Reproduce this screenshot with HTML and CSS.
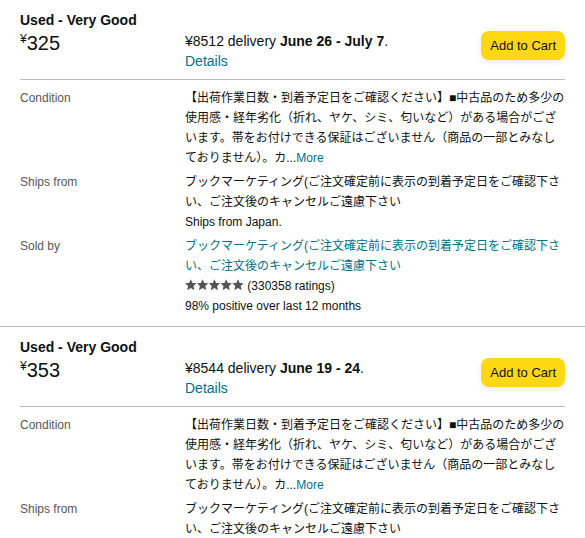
FILE: index.html
```html
<!DOCTYPE html>
<html lang="ja">
<head>
<meta charset="utf-8">
<link rel="stylesheet" href="styles.css">
</head>
<body>
<div class="offer">
  <div class="offer-title">Used - Very Good</div>
  <div class="head">
    <div class="price"><span class="cur">¥</span>325</div>
    <div class="delivery">
      <div>¥8512 delivery <b>June 26 - July 7</b>.</div>
      <a class="link">Details</a>
    </div>
    <button class="cart">Add to Cart</button>
  </div>
  <div class="details">
    <div class="label">Condition</div>
    <div class="value">【出荷作業日数・到着予定日をご確認ください】■中古品のため多少の<br>使用感・経年劣化（折れ、ヤケ、シミ、匂いなど）がある場合がござ<br>います。帯をお付けできる保証はございません（商品の一部とみなし<br>ておりません）。カ...<a class="link">More</a></div>
    <div class="label">Ships from</div>
    <div class="value">ブックマーケティング(ご注文確定前に表示の到着予定日をご確認下さ<br>い、ご注文後のキャンセルご遠慮下さい<br>Ships from Japan.</div>
    <div class="label">Sold by</div>
    <div class="value"><a class="link">ブックマーケティング(ご注文確定前に表示の到着予定日をご確認下さ<br>い、ご注文後のキャンセルご遠慮下さい</a><br><span class="stars"><svg width="59" height="12" viewBox="0 0 59 12"><g fill="#555"><path id="st" d="M5.8 0.2L7.5 4L11.6 4.3L8.5 7.1L9.4 11.3L5.8 9.1L2.2 11.3L3.1 7.1L0 4.3L4.1 4Z"/><use href="#st" x="11.8"/><use href="#st" x="23.6"/><use href="#st" x="35.4"/><use href="#st" x="47.2"/></g></svg></span> (330358 ratings)<br>98% positive over last 12 months</div>
  </div>
</div>
<div class="offer">
  <div class="offer-title">Used - Very Good</div>
  <div class="head">
    <div class="price"><span class="cur">¥</span>353</div>
    <div class="delivery">
      <div>¥8544 delivery <b>June 19 - 24</b>.</div>
      <a class="link">Details</a>
    </div>
    <button class="cart">Add to Cart</button>
  </div>
  <div class="details">
    <div class="label">Condition</div>
    <div class="value">【出荷作業日数・到着予定日をご確認ください】■中古品のため多少の<br>使用感・経年劣化（折れ、ヤケ、シミ、匂いなど）がある場合がござ<br>います。帯をお付けできる保証はございません（商品の一部とみなし<br>ておりません）。カ...<a class="link">More</a></div>
    <div class="label">Ships from</div>
    <div class="value">ブックマーケティング(ご注文確定前に表示の到着予定日をご確認下さ<br>い、ご注文後のキャンセルご遠慮下さい<br>Ships from Japan.</div>
    <div class="label">Sold by</div>
    <div class="value"><a class="link">ブックマーケティング(ご注文確定前に表示の到着予定日をご確認下さ<br>い、ご注文後のキャンセルご遠慮下さい</a></div>
  </div>
</div>
</body>
</html>
```
FILE: styles.css
```css
html, body {
  margin: 0;
  padding: 0;
  background: #fff;
}
body {
  font-family: "Liberation Sans", "Noto Sans CJK JP", sans-serif;
  color: #0f1111;
}
.offer {
  padding: 11px 20px 10px;
  border-bottom: 1px solid #bbb;
}
.offer-title {
  font-size: 14px;
  font-weight: bold;
  line-height: 18px;
}
.head {
  display: flex;
  align-items: flex-start;
  margin-top: 1px;
  padding-bottom: 8px;
  border-bottom: 1px solid #bbb;
}
.price {
  width: 165px;
  flex: none;
  font-size: 20px;
  line-height: 24px;
  margin-top: 1px;
}
.cur {
  font-size: 12px;
  vertical-align: top;
  line-height: 16px;
}
.delivery {
  flex: 1;
  font-size: 14px;
  line-height: 20px;
  margin-top: 1px;
}
.link {
  color: #007185;
  text-decoration: none;
}
.cart {
  flex: none;
  height: 29px;
  margin-top: 1px;
  padding: 0 9px;
  border: none;
  border-radius: 8px;
  background: #ffd814;
  box-shadow: 0 2px 5px rgba(213, 217, 217, 0.6);
  font-family: "Liberation Sans", sans-serif;
  font-size: 13px;
  color: #0f1111;
}
.details {
  display: grid;
  grid-template-columns: 165px 1fr;
  row-gap: 4px;
  padding-top: 8px;
  font-size: 12px;
  line-height: 20px;
}
.label {
  color: #565959;
}
.value {
  white-space: nowrap;
}
.stars svg {
  vertical-align: -1px;
}
```
